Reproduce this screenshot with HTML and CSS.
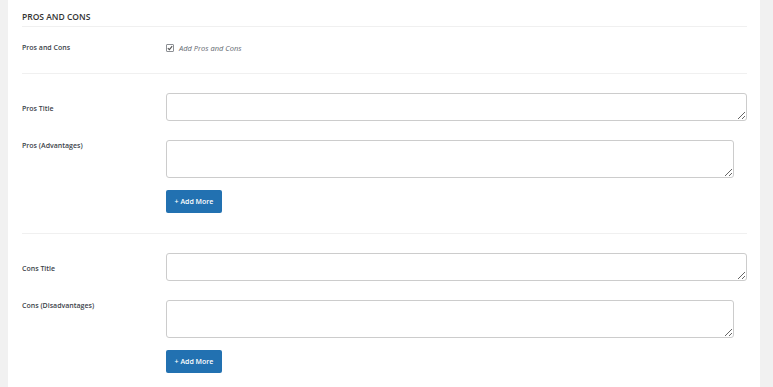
FILE: index.html
```html
<!DOCTYPE html>
<html lang="en">
  <head>
    <meta charset="UTF-8" />
    <title>Pros and Cons</title>
    <link rel="stylesheet" href="styles.css">
  </head>
  <body>
    <div class="panel">
      <!-- Heading -->
      <h2 class="panel-title">Pros and Cons</h2>

      <!-- Toggle -->
      <div class="section section-toggle">
        <div class="row">
          <label class="row-label">Pros and Cons</label>
          <div class="row-field">
            <label class="check">
              <span class="check-box">
                <svg width="6" height="6" viewBox="0 0 6 6">
                  <path d="M0.8 3.1 L2.4 4.6 L5.2 1.2" fill="none" stroke="#555" stroke-width="1.1" />
                </svg>
              </span>
              <span class="check-text">Add Pros and Cons</span>
            </label>
          </div>
        </div>
      </div>

      <!-- Pros -->
      <div class="section">
        <div class="row row-title">
          <label class="row-label">Pros Title</label>
          <div class="row-field">
            <textarea class="input-title"></textarea>
          </div>
        </div>
        <div class="row row-list">
          <label class="row-label">Pros (Advantages)</label>
          <div class="row-field">
            <textarea class="input-list"></textarea>
            <button class="add-button">+ Add More</button>
          </div>
        </div>
      </div>

      <!-- Cons -->
      <div class="section">
        <div class="row row-title">
          <label class="row-label">Cons Title</label>
          <div class="row-field">
            <textarea class="input-title"></textarea>
          </div>
        </div>
        <div class="row row-list">
          <label class="row-label">Cons (Disadvantages)</label>
          <div class="row-field">
            <textarea class="input-list"></textarea>
            <button class="add-button">+ Add More</button>
          </div>
        </div>
      </div>
    </div>
  </body>
</html>
```

FILE: styles.css
```css
/* Global Styles */
body {
  margin: 0;
  background-color: #f1f1f1;
  font-family: "Open Sans", sans-serif;
  color: #3c434a;
  height: 387px;
  overflow: hidden;
}

.panel {
  margin-left: 8px;
  width: 752px;
  min-height: 387px;
  box-sizing: border-box;
  padding: 0 13px 0 14px;
  background-color: #ffffff;
}

.panel-title {
  margin: 0;
  padding: 11px 0 4px;
  font-size: 8.5px;
  line-height: 11px;
  font-weight: 600;
  text-transform: uppercase;
  color: #333;
  border-bottom: 1px solid #f0f0f0;
}

/* Sections */
.section {
  padding: 19px 0 20px;
  border-bottom: 1px solid #f0f0f0;
}

.section-toggle {
  padding: 15px 0 20px;
}

.section:last-child {
  border-bottom: none;
}

.row {
  display: flex;
}

.row + .row {
  margin-top: 19px;
}

.row-label {
  width: 144px;
  flex-shrink: 0;
  font-size: 7px;
  line-height: 11px;
  font-weight: 600;
  color: #3c434a;
}

.row-title {
  align-items: center;
}

.row-title .row-label {
  padding-top: 3px;
}

.row-list .row-label {
  padding-top: 0;
}

.row-field {
  flex: 1;
  display: flex;
  flex-direction: column;
  align-items: flex-start;
}

/* Checkbox */
.check {
  display: flex;
  align-items: center;
  gap: 5px;
  height: 11px;
}

.check-box {
  width: 6px;
  height: 6px;
  border: 1px solid #8c8f94;
  border-radius: 1px;
  display: flex;
  align-items: center;
  justify-content: center;
  background: #fff;
}

.check-text {
  font-size: 7.5px;
  font-style: italic;
  color: #646970;
}

/* Inputs */
textarea {
  display: block;
  box-sizing: border-box;
  margin: 0;
  border: 1px solid #cccccc;
  border-radius: 3px;
  background: #fff;
  font-family: inherit;
}

.input-title {
  width: 100%;
  height: 28px;
}

.input-list {
  width: 568px;
  height: 38px;
}

.add-button {
  margin-top: 12px;
  width: 56px;
  height: 23px;
  padding: 0;
  border: none;
  border-radius: 2px;
  background-color: #2271b1;
  color: #fff;
  font-family: inherit;
  font-size: 7px;
  font-weight: 600;
  cursor: pointer;
}
```
